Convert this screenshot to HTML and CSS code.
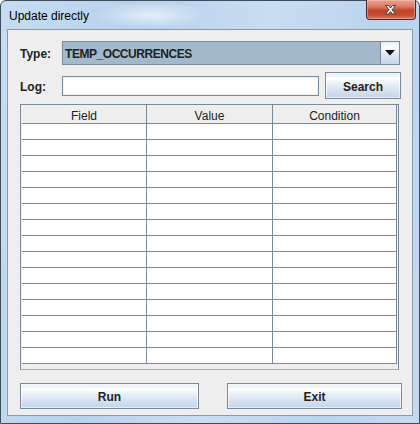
FILE: index.html
```html
<!DOCTYPE html>
<html>
<head>
<meta charset="utf-8">
<link rel="stylesheet" href="styles.css">
</head>
<body>
<div class="window">
  <div class="titlebar">
    <span class="title">Update directly</span>
    <div class="close">
      <svg width="47" height="19" viewBox="0 0 47 19">
        <path d="M18.5 5.5 L21.5 5.5 L23.5 8 L25.5 5.5 L28.5 5.5 L25 9.8 L28.5 14 L25.5 14 L23.5 11.6 L21.5 14 L18.5 14 L22 9.8 Z" fill="#ffffff" stroke="#3d3d45" stroke-width="1" stroke-linejoin="round"/>
      </svg>
    </div>
  </div>
  <div class="panel">
    <div class="type-row">
      <span class="label">Type:</span>
      <div class="combo">
        <span class="combo-text">TEMP_OCCURRENCES</span>
        <div class="combo-arrow">
          <svg width="10" height="6" viewBox="0 0 10 6"><path d="M0 0 H10 L5 5.5 Z" fill="#111"/></svg>
        </div>
      </div>
    </div>
    <div class="log-row">
      <span class="label">Log:</span>
      <div class="textfield"></div>
      <button class="btn search">Search</button>
    </div>
    <div class="scroll">
      <div class="grid">
        <div class="hcell">Field</div><div class="hcell">Value</div><div class="hcell">Condition</div>
        <div class="cell"></div><div class="cell"></div><div class="cell"></div>
        <div class="cell"></div><div class="cell"></div><div class="cell"></div>
        <div class="cell"></div><div class="cell"></div><div class="cell"></div>
        <div class="cell"></div><div class="cell"></div><div class="cell"></div>
        <div class="cell"></div><div class="cell"></div><div class="cell"></div>
        <div class="cell"></div><div class="cell"></div><div class="cell"></div>
        <div class="cell"></div><div class="cell"></div><div class="cell"></div>
        <div class="cell"></div><div class="cell"></div><div class="cell"></div>
        <div class="cell"></div><div class="cell"></div><div class="cell"></div>
        <div class="cell"></div><div class="cell"></div><div class="cell"></div>
        <div class="cell"></div><div class="cell"></div><div class="cell"></div>
        <div class="cell"></div><div class="cell"></div><div class="cell"></div>
        <div class="cell"></div><div class="cell"></div><div class="cell"></div>
        <div class="cell"></div><div class="cell"></div><div class="cell"></div>
        <div class="cell"></div><div class="cell"></div><div class="cell"></div>
      </div>
    </div>
    <div class="buttons">
      <button class="btn run">Run</button>
      <button class="btn exit">Exit</button>
    </div>
  </div>
</div>
</body>
</html>
```
FILE: styles.css
```css
html, body {
  margin: 0;
  padding: 0;
  background: #ffffff;
}
.window {
  box-sizing: border-box;
  width: 420px;
  height: 424px;
  border: 1px solid #3e4c5c;
  border-radius: 6px 6px 0 0;
  background:
    radial-gradient(ellipse 55px 14px at 150px 14px, rgba(235, 243, 252, 0.85), rgba(235, 243, 252, 0) 100%),
    linear-gradient(100deg, #c6dcf1 0%, #b7d1ec 30%, #c9ddf2 55%, #b9d3ee 80%, #c4daf0 100%);
  padding: 0 6px 7px 6px;
  display: flex;
  flex-direction: column;
  font-family: "Liberation Sans", Arial, sans-serif;
}
.titlebar {
  height: 29px;
  display: flex;
  align-items: flex-start;
  justify-content: space-between;
}
.title {
  font-size: 12px;
  color: #000;
  margin-left: 2px;
  margin-top: 8px;
  line-height: 14px;
}
.close {
  width: 48px;
  height: 19px;
  margin-right: -3px;
  margin-top: -1px;
  border: 1px solid #4a2a28;
  border-top: none;
  border-radius: 0 0 4px 4px;
  background: linear-gradient(to bottom, #e9a593 0%, #d97a62 35%, #c2442a 55%, #c84d31 80%, #dc7a5e 100%);
  box-shadow: inset 0 0 0 1px rgba(255, 200, 190, 0.45);
}
.close svg {
  display: block;
}
.panel {
  box-sizing: border-box;
  width: 406px;
  height: 387px;
  border: 1px solid #8c99a6;
  background: #eeeeee;
  padding: 11px 10px 6px 12px;
  display: flex;
  flex-direction: column;
}
.label {
  font-weight: bold;
  font-size: 12px;
  color: #222;
  width: 42px;
  flex: none;
  padding-top: 2px;
}
.type-row {
  height: 24px;
  display: flex;
  align-items: center;
}
.combo {
  box-sizing: border-box;
  width: 338px;
  height: 24px;
  border: 1px solid #7a8a99;
  background: #a4b8cc;
  display: flex;
  align-items: center;
}
.combo-text {
  flex: 1;
  padding-left: 2px;
  padding-top: 1px;
  font-weight: bold;
  font-size: 12px;
  letter-spacing: -0.45px;
  color: #222;
}
.combo-arrow {
  box-sizing: border-box;
  width: 19px;
  height: 22px;
  border-left: 1px solid #7a8a99;
  background: linear-gradient(to bottom, #e4edf6 0%, #ffffff 25%, #dfe9f4 55%, #c5d7ea 100%);
  display: flex;
  align-items: center;
  justify-content: center;
}
.combo-arrow svg {
  display: block;
}
.log-row {
  margin-top: 7px;
  height: 27px;
  display: flex;
  align-items: center;
}
.textfield {
  box-sizing: border-box;
  width: 257px;
  height: 20px;
  border: 1px solid #7a8a99;
  background: #ffffff;
  box-shadow: inset 0 0 0 1px #f4f4f4;
}
.btn {
  box-sizing: border-box;
  margin: 0;
  padding: 2px 0 0 0;
  border: 1px solid #7a8a99;
  background: linear-gradient(to bottom, #e2ebf5 0%, #ffffff 22%, #e6eef7 45%, #d2e0ee 75%, #c3d5e8 100%);
  font-family: "Liberation Sans", Arial, sans-serif;
  font-weight: bold;
  font-size: 12px;
  color: #222;
  box-shadow: inset 0 0 0 1px rgba(255, 255, 255, 0.6);
}
.search {
  width: 76px;
  height: 27px;
  margin-left: 6px;
}
.scroll {
  box-sizing: border-box;
  margin-top: 5px;
  width: 379px;
  height: 266px;
  border: 1px solid #7a8a99;
  border-bottom-color: #a3adb7;
  padding-left: 1px;
  padding-right: 1px;
  background: #eeeeee;
}
.grid {
  display: grid;
  grid-template-columns: 125px 126px 124px;
  grid-auto-rows: 16px;
  grid-template-rows: 19px;
  background: #ffffff;
  border-bottom: 1px solid #eeeeee;
}
.hcell {
  box-sizing: border-box;
  background: #eeeeee;
  border-right: 1px solid #7a8a99;
  border-bottom: 1px solid #7a8a99;
  font-size: 12px;
  color: #222;
  text-align: center;
  line-height: 18px;
  padding-top: 2px;
}
.cell {
  box-sizing: border-box;
  background: #ffffff;
  border-right: 1px solid #7a8a99;
  border-bottom: 1px solid #7a8a99;
}
.buttons {
  margin-top: 13px;
  height: 26px;
  display: flex;
  justify-content: space-between;
}
.run {
  width: 179px;
  height: 26px;
}
.exit {
  width: 175px;
  height: 26px;
}
```
